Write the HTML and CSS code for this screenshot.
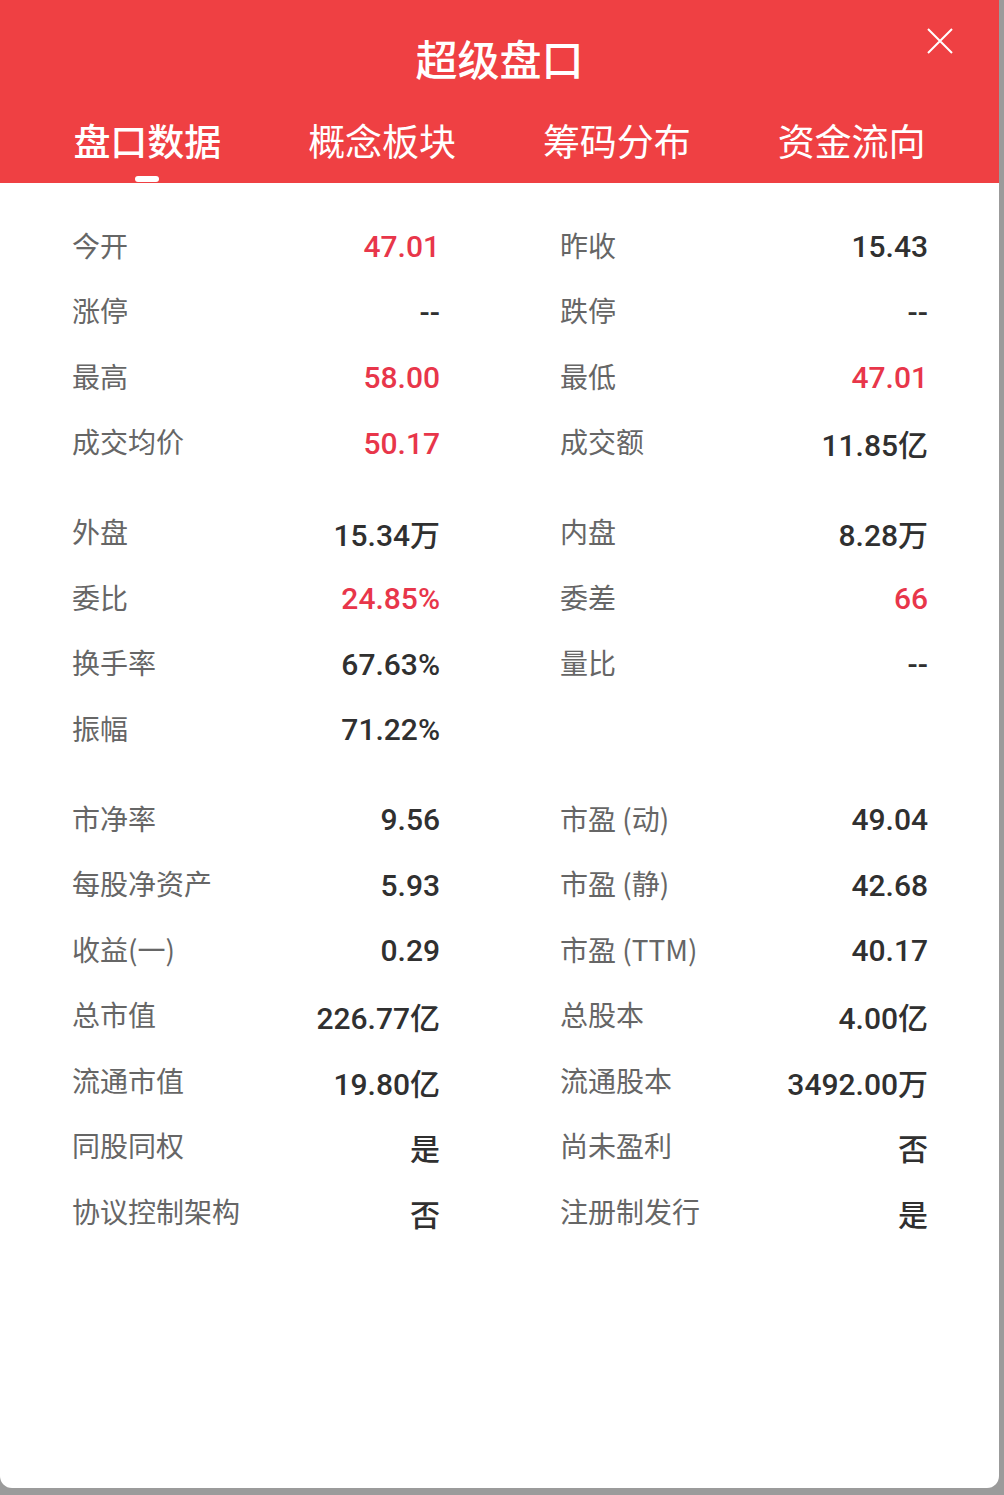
FILE: index.html
```html
<!DOCTYPE html>
<html lang="zh-CN">
<head>
<meta charset="utf-8">
<title>超级盘口</title>
<link rel="stylesheet" href="styles.css">
</head>
<body>
<div class="modal">
  <header class="header">
    <h1 class="title">超级盘口</h1>
    <button class="close" aria-label="关闭">
      <svg width="26" height="26" viewBox="0 0 26 26"><path d="M1 1 L25 25 M25 1 L1 25" stroke="#fff" stroke-width="2" fill="none"/></svg>
    </button>
    <nav class="tabs">
      <div class="tab active"><span class="tab-text">盘口数据</span><i class="indicator"></i></div>
      <div class="tab"><span class="tab-text">概念板块</span></div>
      <div class="tab"><span class="tab-text">筹码分布</span></div>
      <div class="tab"><span class="tab-text">资金流向</span></div>
    </nav>
  </header>
  <main class="content">
    <section class="group">
      <div class="item"><span class="label">今开</span><span class="value red">47.01</span></div>
      <div class="item"><span class="label">昨收</span><span class="value">15.43</span></div>
      <div class="item"><span class="label">涨停</span><span class="value">--</span></div>
      <div class="item"><span class="label">跌停</span><span class="value">--</span></div>
      <div class="item"><span class="label">最高</span><span class="value red">58.00</span></div>
      <div class="item"><span class="label">最低</span><span class="value red">47.01</span></div>
      <div class="item"><span class="label">成交均价</span><span class="value red">50.17</span></div>
      <div class="item"><span class="label">成交额</span><span class="value">11.85亿</span></div>
    </section>
    <section class="group">
      <div class="item"><span class="label">外盘</span><span class="value">15.34万</span></div>
      <div class="item"><span class="label">内盘</span><span class="value">8.28万</span></div>
      <div class="item"><span class="label">委比</span><span class="value red">24.85%</span></div>
      <div class="item"><span class="label">委差</span><span class="value red">66</span></div>
      <div class="item"><span class="label">换手率</span><span class="value">67.63%</span></div>
      <div class="item"><span class="label">量比</span><span class="value">--</span></div>
      <div class="item"><span class="label">振幅</span><span class="value">71.22%</span></div>
    </section>
    <section class="group">
      <div class="item"><span class="label">市净率</span><span class="value">9.56</span></div>
      <div class="item"><span class="label">市盈 (动)</span><span class="value">49.04</span></div>
      <div class="item"><span class="label">每股净资产</span><span class="value">5.93</span></div>
      <div class="item"><span class="label">市盈 (静)</span><span class="value">42.68</span></div>
      <div class="item"><span class="label">收益(一)</span><span class="value">0.29</span></div>
      <div class="item"><span class="label">市盈 (TTM)</span><span class="value">40.17</span></div>
      <div class="item"><span class="label">总市值</span><span class="value">226.77亿</span></div>
      <div class="item"><span class="label">总股本</span><span class="value">4.00亿</span></div>
      <div class="item"><span class="label">流通市值</span><span class="value">19.80亿</span></div>
      <div class="item"><span class="label">流通股本</span><span class="value">3492.00万</span></div>
      <div class="item"><span class="label">同股同权</span><span class="value">是</span></div>
      <div class="item"><span class="label">尚未盈利</span><span class="value">否</span></div>
      <div class="item"><span class="label">协议控制架构</span><span class="value">否</span></div>
      <div class="item"><span class="label">注册制发行</span><span class="value">是</span></div>
    </section>
  </main>
</div>
</body>
</html>
```

FILE: styles.css
```css
html, body {
  margin: 0;
  padding: 0;
}
body {
  width: 1004px;
  height: 1495px;
  background: #9b9b9b;
  font-family: "Noto Sans CJK SC", "Noto Sans", sans-serif;
  overflow: hidden;
}
.modal {
  width: 999px;
  height: 1488px;
  background: #ffffff;
  border-radius: 0 0 12px 12px;
  overflow: hidden;
  display: flex;
  flex-direction: column;
}
.header {
  position: relative;
  flex: 0 0 183px;
  background: #ef4043;
  color: #ffffff;
  display: flex;
  flex-direction: column;
  box-sizing: border-box;
  padding-top: 30px;
}
.title {
  margin: 0;
  height: 56px;
  line-height: 56px;
  font-size: 42px;
  font-weight: 500;
  text-align: center;
}
.close {
  position: absolute;
  top: 28px;
  left: 927px;
  width: 26px;
  height: 26px;
  padding: 0;
  border: 0;
  background: transparent;
  display: block;
}
.close svg { display: block; }
.tabs {
  margin-top: 29px;
  padding: 0 30px;
  display: flex;
}
.tab {
  flex: 1;
  display: flex;
  flex-direction: column;
  align-items: center;
  font-size: 37px;
  font-weight: 400;
}
.tab-text {
  display: block;
  height: 50px;
  line-height: 50px;
}
.tab.active { font-weight: 500; }
.indicator {
  display: block;
  flex: 0 0 6px;
  margin-top: 11px;
  width: 24px;
  height: 6px;
  border-radius: 3px;
  background: #ffffff;
}
.content {
  padding: 29px 71px 0 72px;
  display: flex;
  flex-direction: column;
  gap: 24.5px;
}
.group {
  display: grid;
  grid-template-columns: 368px 368px;
  column-gap: 120px;
  grid-auto-rows: 65.5px;
}
.item {
  display: flex;
  align-items: center;
  justify-content: space-between;
}
.label {
  font-size: 28px;
  color: #666666;
  white-space: nowrap;
}
.value {
  font-family: Roboto, "Noto Sans CJK SC", sans-serif;
  font-size: 30px;
  font-weight: 500;
  color: #303030;
  white-space: nowrap;
  padding-top: 4px;
}
.value.red { color: #e8364a; }
```
